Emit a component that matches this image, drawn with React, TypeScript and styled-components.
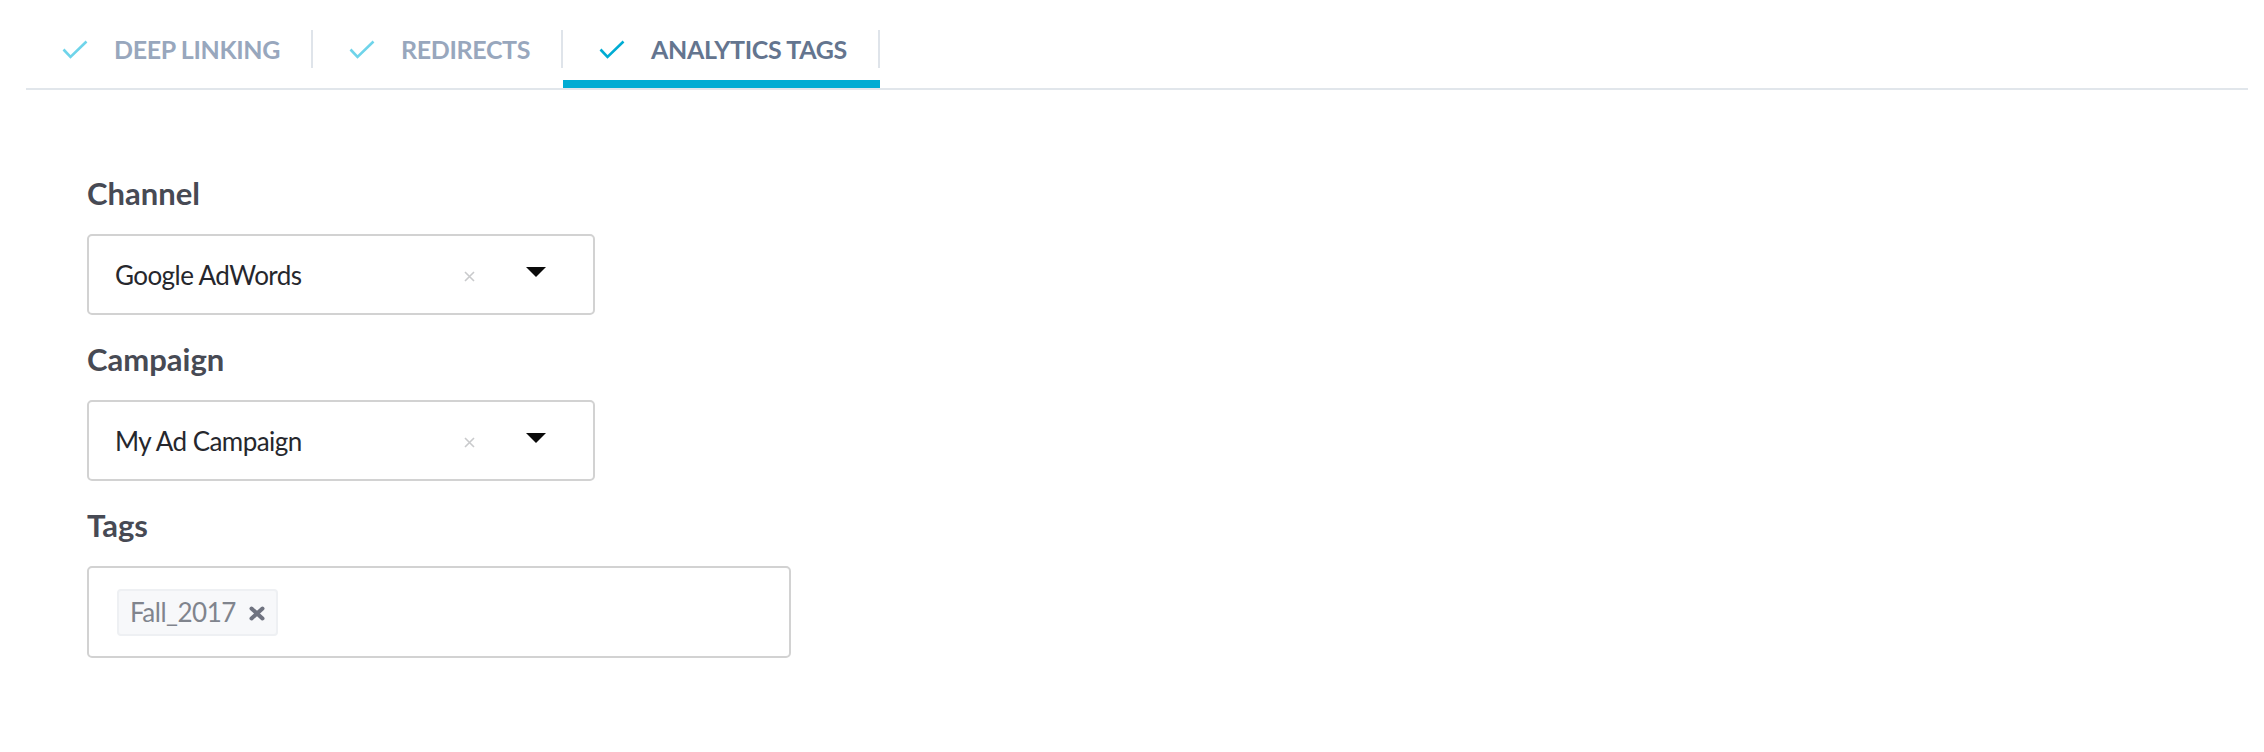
import React from "react";
import styled, { createGlobalStyle } from "styled-components";

const Global = createGlobalStyle`
  html, body { margin: 0; padding: 0; background: #ffffff; }
  body { font-family: Lato, "Open Sans", sans-serif; }
  * { box-sizing: border-box; }
`;

const Page = styled.div`
  padding: 30px 16px 0 26px;
`;

const TabBar = styled.nav`
  display: flex;
  border-bottom: 2px solid #e1e6eb;
`;

const Tab = styled.div<{ $active?: boolean }>`
  display: flex;
  flex-direction: column;
  padding-bottom: 12px;
  border-bottom: 8px solid ${(p) => (p.$active ? "#00acd3" : "transparent")};
`;

const TabLabel = styled.div<{ $active?: boolean }>`
  display: flex;
  align-items: center;
  gap: 26px;
  height: 38px;
  padding: 0 31px 0 36px;
  border-right: 2px solid #dfe4ea;
  font-family: Lato, sans-serif;
  font-weight: 700;
  font-size: 25px;
  letter-spacing: -0.35px;
  color: ${(p) => (p.$active ? "#64758f" : "#98a7bd")};
  text-transform: uppercase;
  white-space: nowrap;
`;

const Form = styled.div`
  padding: 83px 0 0 61px;
`;

const FieldLabel = styled.div`
  font-family: Lato, sans-serif;
  font-weight: 700;
  font-size: 31px;
  line-height: 40px;
  color: #474a54;
  margin-bottom: 21px;
`;

const Select = styled.div`
  display: flex;
  align-items: center;
  width: 508px;
  height: 81px;
  padding: 0 47px 0 26px;
  border: 2px solid #d2d2d2;
  border-radius: 5px;
  margin-bottom: 24px;
`;

const SelectValue = styled.span`
  flex: 1;
  font-family: Lato, sans-serif;
  font-size: 26px;
  letter-spacing: -0.55px;
  color: #26272d;
  white-space: nowrap;
`;

const ClearIcon = styled.svg`
  width: 11px;
  height: 11px;
  margin-top: 3px;
  margin-right: 51px;
`;

const Arrow = styled.svg`
  width: 20px;
  height: 10px;
  margin-top: -5px;
`;

const TagsBox = styled.div`
  display: flex;
  align-items: center;
  width: 704px;
  height: 92px;
  padding: 0 28px;
  border: 2px solid #d2d2d2;
  border-radius: 5px;
`;

const Chip = styled.span`
  display: inline-flex;
  align-items: center;
  gap: 13px;
  height: 47px;
  padding: 0 11px;
  background: #f7f8fa;
  border: 2px solid #eef0f3;
  border-radius: 4px;
  font-family: Lato, sans-serif;
  font-size: 26px;
  letter-spacing: -0.5px;
  font-weight: 400;
  color: #80848d;
`;

const ChipRemove = styled.svg`
  width: 16px;
  height: 15px;
  margin-top: 2px;
`;

const Check = ({ color }: { color: string }) => (
  <svg width="26" height="19" viewBox="0 0 26 19" fill="none">
    <polyline points="1.5,9.5 8.5,17 24.5,1.5" stroke={color} strokeWidth="2.6" strokeLinejoin="miter" />
  </svg>
);

const tabs = [
  { label: "Deep Linking", active: false },
  { label: "Redirects", active: false },
  { label: "Analytics Tags", active: true },
];

const SelectField = ({ label, value }: { label: string; value: string }) => (
  <>
    <FieldLabel>{label}</FieldLabel>
    <Select>
      <SelectValue>{value}</SelectValue>
      <ClearIcon viewBox="0 0 11 11">
        <path d="M1 1 L10 10 M10 1 L1 10" stroke="#c9cacc" strokeWidth="1.6" />
      </ClearIcon>
      <Arrow viewBox="0 0 20 10">
        <polygon points="0,0 20,0 10,10" fill="#0a0a0a" />
      </Arrow>
    </Select>
  </>
);

export default function App() {
  return (
    <Page>
      <Global />
      <TabBar>
        {tabs.map((t) => (
          <Tab key={t.label} $active={t.active}>
            <TabLabel $active={t.active}>
              <Check color={t.active ? "#00acd3" : "#6fd4ea"} />
              {t.label}
            </TabLabel>
          </Tab>
        ))}
      </TabBar>
      <Form>
        <SelectField label="Channel" value="Google AdWords" />
        <SelectField label="Campaign" value="My Ad Campaign" />
        <FieldLabel>Tags</FieldLabel>
        <TagsBox>
          <Chip>
            Fall_2017
            <ChipRemove viewBox="0 0 16 15">
              <path d="M2.5 2.5 L13.5 12.5 M13.5 2.5 L2.5 12.5" stroke="#6f7380" strokeWidth="4" strokeLinecap="round" />
            </ChipRemove>
          </Chip>
        </TagsBox>
      </Form>
    </Page>
  );
}
